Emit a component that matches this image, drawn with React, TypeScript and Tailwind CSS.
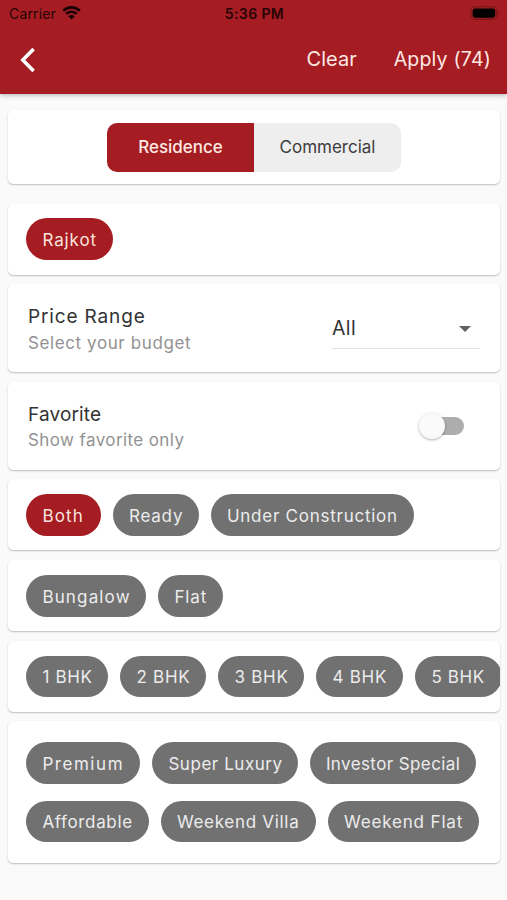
import React, { useState } from "react";

interface Option {
  label: string;
  size: string;
}

const statuses: Option[] = [
  { label: "Both", size: "w-[74.5px] tracking-[1.15px]" },
  { label: "Ready", size: "w-[86px] tracking-[0.8px]" },
  { label: "Under Construction", size: "w-[203px] tracking-[0.75px]" },
];

const propertyTypes: Option[] = [
  { label: "Bungalow", size: "w-[120px] tracking-[1.15px]" },
  { label: "Flat", size: "w-[65px] tracking-[0.9px]" },
];

const bedrooms: Option[] = [
  { label: "1 BHK", size: "w-[82px] tracking-[0.65px]" },
  { label: "2 BHK", size: "w-[86px] tracking-[0.75px]" },
  { label: "3 BHK", size: "w-[86px] tracking-[0.75px]" },
  { label: "4 BHK", size: "w-[87px] tracking-[0.75px]" },
  { label: "5 BHK", size: "w-[87px] tracking-[0.65px]" },
];

const categories: Option[] = [
  { label: "Premium", size: "w-[114px] tracking-[1.55px]" },
  { label: "Super Luxury", size: "w-[145.5px] tracking-[0.55px]" },
  { label: "Investor Special", size: "w-[166.5px] tracking-[0.4px]" },
  { label: "Affordable", size: "w-[122.5px] tracking-[0.65px]" },
  { label: "Weekend Villa", size: "w-[155px] tracking-[0.7px]" },
  { label: "Weekend Flat", size: "w-[151.5px] tracking-[0.85px]" },
];

function Card({ className, children }: { className: string; children: React.ReactNode }) {
  return (
    <section
      className={`mr-[7px] ml-2 overflow-hidden rounded-[5px] bg-white shadow-[0_1px_2px_rgba(0,0,0,0.2),0_1px_1px_rgba(0,0,0,0.06)] ${className}`}
    >
      {children}
    </section>
  );
}

function Chip({ option, active, onClick }: { option: Option; active?: boolean; onClick?: () => void }) {
  return (
    <button
      onClick={onClick}
      className={`flex h-[41.5px] shrink-0 items-center rounded-full pt-[3px] pl-4 text-[17px] whitespace-nowrap ${option.size} ${
        active ? "bg-[#a51d22] text-[#fbe4df]" : "bg-[#717171] text-[#ececec]"
      }`}
    >
      {option.label}
    </button>
  );
}

export default function App() {
  const [segment, setSegment] = useState("Residence");
  const [status, setStatus] = useState("Both");
  const [favoriteOnly, setFavoriteOnly] = useState(false);

  return (
    <div className="h-[900px] w-[507px] overflow-hidden bg-[#fafafa] font-['Inter',sans-serif] text-[#333]">
      {/* Header */}
      <header className="h-[94px] bg-[#a51d22] shadow-[0_1px_5px_rgba(0,0,0,0.3)]">
        <div className="grid h-[27px] grid-cols-3 items-center pr-[7px] pl-[9px] text-[14px] text-[#260406]">
          <div className="flex items-center gap-[6px]">
            <span className="tracking-[0.15px]">Carrier</span>
            <svg className="-mt-[2px]" width="19" height="15" viewBox="0 0 19 15" fill="none" stroke="#150203" strokeWidth="2.7">
              <path d="M1.2 5.7 A11.8 11.8 0 0 1 17.8 5.7" />
              <path d="M4.3 8.9 A7.4 7.4 0 0 1 14.7 8.9" />
              <path d="M9.5 14.5 L6.4 11.2 A4.4 4.4 0 0 1 12.6 11.2 Z" fill="#150203" stroke="none" />
            </svg>
          </div>
          <span className="text-center font-semibold tracking-[0.4px]">5:36 PM</span>
          <svg className="justify-self-end" width="30" height="15" viewBox="0 0 30 15">
            <rect x="0.8" y="0.8" width="26" height="12.6" rx="4" fill="none" stroke="#7a1417" strokeWidth="1.1" />
            <rect x="2.6" y="2.5" width="22.6" height="9.2" rx="2.4" fill="#000" />
            <path d="M28.2 5 C29.6 5.6 29.6 8.6 28.2 9.2 Z" fill="#7a1417" />
          </svg>
        </div>
        <div className="flex h-[66px] items-center pr-[16px] pl-[19px] text-[#fde8e2]">
          <svg width="18" height="26" viewBox="0 0 18 26" fill="none" stroke="#fff" strokeWidth="3.6">
            <path d="M14.6 1.9 L3.8 13 L14.6 24.1" />
          </svg>
          <button className="mb-[2px] ml-auto text-[20px]">Clear</button>
          <button className="ml-[37px] text-[19.5px] tracking-[0.2px]">Apply (74)</button>
        </div>
      </header>

      <Card className="mt-4 flex h-[74px] justify-center pt-[13px]">
        <div className="flex h-[49px] w-[294px] overflow-hidden rounded-[10px] text-[17px]">
          {["Residence", "Commercial"].map((name) => (
            <button
              key={name}
              onClick={() => setSegment(name)}
              className={`flex-1 ${
                segment === name ? "bg-[#a51d22] font-medium text-[#fde8e2]" : "bg-[#eee] text-[#3c3c3c]"
              }`}
            >
              {name}
            </button>
          ))}
        </div>
      </Card>

      <Card className="mt-5 h-[71px] pt-[14px] pl-[18.4px]">
        <Chip option={{ label: "Rajkot", size: "w-[87px] tracking-[0.9px]" }} active />
      </Card>

      {/* Price range */}
      <Card className="mt-[9px] flex h-[88px] justify-between pr-5 pl-5">
        <div className="pt-[20px]">
          <h2 className="text-[19px] leading-[26px] tracking-[0.85px]">Price Range</h2>
          <p className="text-[17px] leading-[26px] tracking-[0.6px] text-[#929292]">Select your budget</p>
        </div>
        <div className="mt-[25px] flex h-[40px] w-[148px] items-center justify-between border-b border-[#e4e4e4] pr-[9px]">
          <span className="text-[19.5px] tracking-[0.4px]">All</span>
          <svg width="12" height="6" viewBox="0 0 12 6">
            <path d="M0 0 H12 L6 6 Z" fill="#606060" />
          </svg>
        </div>
      </Card>

      {/* Favorite */}
      <Card className="mt-[10px] flex h-[88px] justify-between pr-[36px] pl-5">
        <div className="pt-[20px]">
          <h2 className="text-[19px] leading-[25px] tracking-[0.15px]">Favorite</h2>
          <p className="text-[17px] leading-[26px] tracking-[0.4px] text-[#929292]">Show favorite only</p>
        </div>
        <button
          onClick={() => setFavoriteOnly(!favoriteOnly)}
          className={`mt-[35px] flex h-[18px] w-[41px] items-center rounded-full bg-[#adadad] ${favoriteOnly ? "justify-end" : ""}`}
        >
          <span className="-ml-[4px] h-[26px] w-[26px] shrink-0 rounded-full bg-[#fafafa] shadow-[0_1px_3px_rgba(0,0,0,0.3)]" />
        </button>
      </Card>

      <Card className="mt-[9px] flex h-[71px] gap-3 pt-[15px] pl-[18.4px]">
        {statuses.map((option) => (
          <Chip
            key={option.label}
            option={option}
            active={status === option.label}
            onClick={() => setStatus(option.label)}
          />
        ))}
      </Card>

      <Card className="mt-[10px] flex h-[71px] gap-3 pt-[15px] pl-[18.4px]">
        {propertyTypes.map((option) => (
          <Chip key={option.label} option={option} />
        ))}
      </Card>

      <Card className="mt-[10px] flex h-[71px] gap-3 pt-[14.5px] pl-[18.4px]">
        {bedrooms.map((option) => (
          <Chip key={option.label} option={option} />
        ))}
      </Card>

      <Card className="mt-[9px] flex h-[142px] flex-wrap content-start gap-x-3 gap-y-[17px] pt-[21px] pl-[18.4px]">
        {categories.map((option) => (
          <Chip key={option.label} option={option} />
        ))}
      </Card>
    </div>
  );
}
